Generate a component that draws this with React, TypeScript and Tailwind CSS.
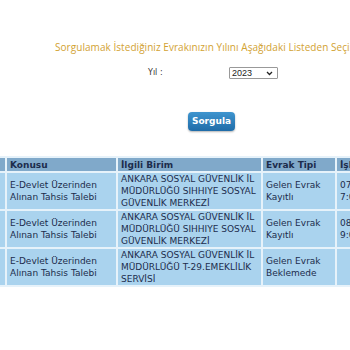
const ROWS = [
  {
    konu: ['E-Devlet Üzerinden', 'Alınan Tahsis Talebi'],
    birim: ['ANKARA SOSYAL GÜVENLİK İL', 'MÜDÜRLÜĞÜ SIHHIYE SOSYAL', 'GÜVENLİK MERKEZİ'],
    tip: ['Gelen Evrak', 'Kayıtlı'],
    tarih: ['07', '7:0'],
  },
  {
    konu: ['E-Devlet Üzerinden', 'Alınan Tahsis Talebi'],
    birim: ['ANKARA SOSYAL GÜVENLİK İL', 'MÜDÜRLÜĞÜ SIHHIYE SOSYAL', 'GÜVENLİK MERKEZİ'],
    tip: ['Gelen Evrak', 'Kayıtlı'],
    tarih: ['08', '9:0'],
  },
  {
    konu: ['E-Devlet Üzerinden', 'Alınan Tahsis Talebi'],
    birim: ['ANKARA SOSYAL GÜVENLİK İL', 'MÜDÜRLÜĞÜ T-29.EMEKLİLİK', 'SERVİSİ'],
    tip: ['Gelen Evrak', 'Beklemede'],
    tarih: [],
  },
];

function Lines({ items }: { items: string[] }) {
  return (
    <>
      {items.map((t, i) => (
        <div key={i} className="whitespace-nowrap">{t}</div>
      ))}
    </>
  );
}

export default function App() {
  return (
    <div
      className="w-[350px] h-[350px] overflow-hidden bg-white text-[#1c2c4c]"
      style={{ fontFamily: '"DejaVu Sans", Verdana, sans-serif' }}
    >
      {/* Title */}
      <div
        className="pt-[40px] pl-[55px] whitespace-nowrap text-[10px] tracking-[0.05px] text-[#d2a232] leading-[14px]"
        style={{ fontFamily: '"Open Sans", sans-serif' }}
      >
        Sorgulamak İstediğiniz Evrakınızın Yılını Aşağıdaki Listeden Seçiniz
      </div>

      {/* Year select */}
      <div className="flex items-center mt-[13px] h-[12px]">
        <span className="ml-[148px] w-[81px] text-[8px] text-[#333]">Yıl :</span>
        <div className="w-[49px] h-[12px] border border-[#999] bg-white flex items-center justify-between px-[2px] rounded-[1px]">
          <span className="text-[9px] leading-none text-[#222]" style={{ fontFamily: '"Liberation Sans", Arial, sans-serif' }}>2023</span>
          <svg width="7" height="5" viewBox="0 0 7 5" className="mr-[2px]">
            <path d="M1 1 L3.5 3.5 L6 1" stroke="#222" strokeWidth="1.3" fill="none" />
          </svg>
        </div>
      </div>

      {/* Button */}
      <div className="mt-[28px] pl-[188px]">
        <button className="w-[47px] h-[19px] rounded-[4px] bg-gradient-to-b from-[#3f95cf] to-[#1f6ca8] text-white text-[9px] font-bold shadow-[0_1px_2px_rgba(0,0,0,0.3)]">
          Sorgula
        </button>
      </div>

      {/* Table */}
      <div className="mt-[25px] ml-[-37px]">
        <table className="table-fixed w-[446px] border-separate border-spacing-[2px] bg-[#e6f2fa] text-[9px] leading-[12px]">
          <thead>
            <tr className="bg-[#80a9ca] text-left font-bold text-[#1c2c4c] whitespace-nowrap">
              <th className="w-[40px] h-[13px] px-[3px]"></th>
              <th className="w-[109px] px-[3px]">Konusu</th>
              <th className="w-[143px] px-[3px]">İlgili Birim</th>
              <th className="w-[72px] px-[3px]">Evrak Tipi</th>
              <th className="w-[70px] px-[3px] overflow-hidden">İşlem Tarihi</th>
            </tr>
          </thead>
          <tbody>
            {ROWS.map((r, i) => (
              <tr key={i} className="bg-[#aad3ee] align-middle">
                <td className="h-[36px] px-[3px]"></td>
                <td className="px-[3px]"><Lines items={r.konu} /></td>
                <td className="px-[3px]"><Lines items={r.birim} /></td>
                <td className="px-[3px]"><Lines items={r.tip} /></td>
                <td className="px-[3px]"><Lines items={r.tarih} /></td>
              </tr>
            ))}
          </tbody>
        </table>
      </div>
    </div>
  );
}
